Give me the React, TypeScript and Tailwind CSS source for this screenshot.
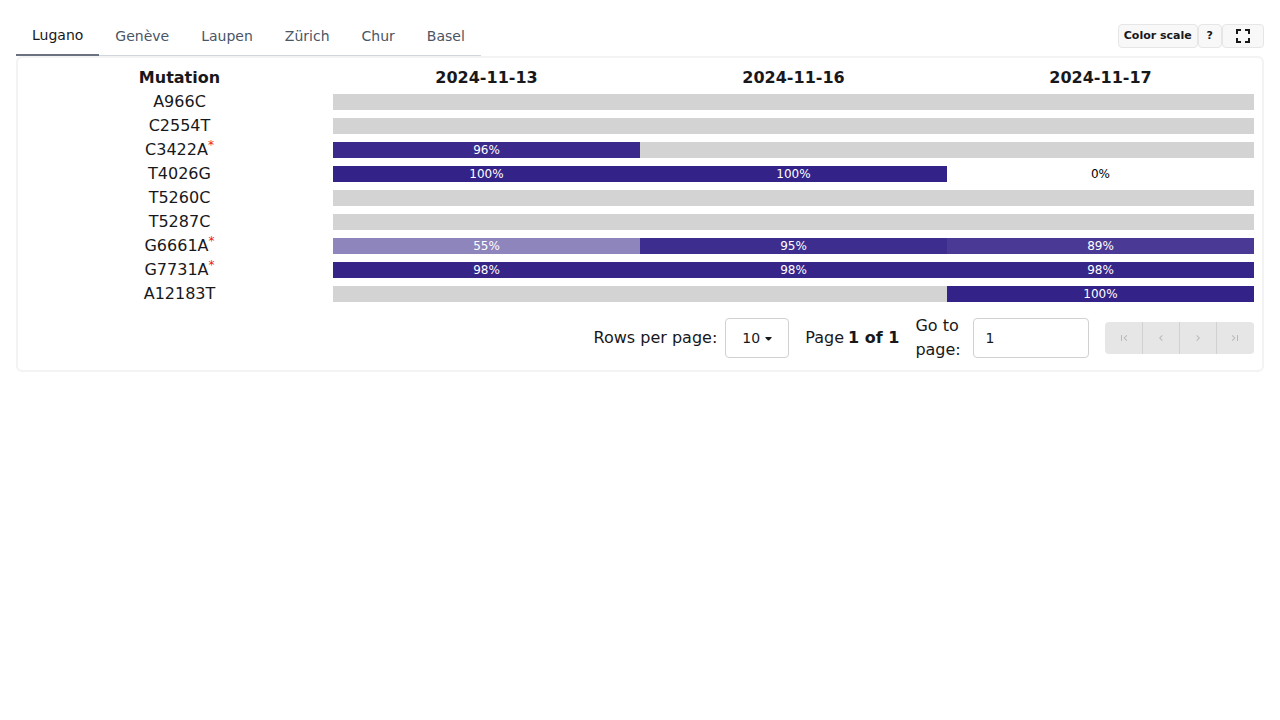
import React from "react";

const tabs = ["Lugano", "Genève", "Laupen", "Zürich", "Chur", "Basel"];
const dates = ["2024-11-13", "2024-11-16", "2024-11-17"];

type Cell = [text: string, background: string] | null;
type Row = { name: string; flagged?: boolean; cells: Cell[] };

const full = "bg-[#332288]";
const c98 = "bg-[#372689]";

const rows: Row[] = [
  { name: "A966C", cells: [null, null, null] },
  { name: "C2554T", cells: [null, null, null] },
  { name: "C3422A", flagged: true, cells: [["96%", "bg-[#3b2a8c]"], null, null] },
  { name: "T4026G", cells: [["100%", full], ["100%", full], ["0%", "bg-white"]] },
  { name: "T5260C", cells: [null, null, null] },
  { name: "T5287C", cells: [null, null, null] },
  {
    name: "G6661A",
    flagged: true,
    cells: [["55%", "bg-[#8f85bd]"], ["95%", "bg-[#3d2d8e]"], ["89%", "bg-[#4a3a95]"]],
  },
  { name: "G7731A", flagged: true, cells: [["98%", "bg-[#362587]"], ["98%", c98], ["98%", c98]] },
  { name: "A12183T", cells: [null, null, ["100%", full]] },
];

const pageIcons = [
  "M18.41 16.59L13.82 12l4.59-4.59L17 6l-6 6l6 6zM6 6h2v12H6z",
  "M15.41 16.58L10.83 12l4.58-4.59L14 6l-6 6l6 6z",
  "M8.59 16.58L13.17 12L8.59 7.41L10 6l6 6l-6 6z",
  "M5.59 7.41L10.18 12l-4.59 4.59L7 18l6-6l-6-6zM16 6h2v12h-2z",
];

function Icon({ d, className }: { d: string; className: string }) {
  return (
    <svg viewBox="0 0 24 24" fill="currentColor" className={className}>
      <path d={d} />
    </svg>
  );
}

function Toolbar() {
  const button =
    "flex h-6 items-center justify-center rounded border border-[#e6e6e6] bg-[#f8f8f8] text-[11px] font-bold leading-none";
  return (
    <div className="flex pt-2">
      <button className={`${button} w-20 pb-px pr-[0.5px]`}>Color scale</button>
      <button className={`${button} w-6 pb-px pr-[0.5px]`}>?</button>
      <button className={`${button} w-[42px]`}>
        <Icon
          className="size-6 shrink-0"
          d="M5 5h5v2H7v3H5zm9 0h5v5h-2V7h-3zm3 9h2v5h-5v-2h3zm-7 3v2H5v-5h2v3z"
        />
      </button>
    </div>
  );
}

function MutationTable() {
  return (
    <div>
      <div className="grid h-6 grid-cols-4 text-center font-bold">
        <div>Mutation</div>
        {dates.map((date) => (
          <div key={date}>{date}</div>
        ))}
      </div>
      {rows.map((row) => (
        <div key={row.name} className="grid h-6 grid-cols-4 items-center text-center">
          <div className="h-6">
            {row.name}
            {row.flagged && <sup className="text-xs leading-none text-[#f01818]">*</sup>}
          </div>
          {row.cells.map((cell, i) => (
            <div
              key={i}
              className={`h-4 text-xs leading-4 ${cell ? cell[1] : "bg-[#d3d3d3]"} ${
                cell && cell[0] === "0%" ? "text-black" : "text-white"
              }`}
            >
              {cell?.[0]}
            </div>
          ))}
        </div>
      ))}
    </div>
  );
}

function Pagination() {
  return (
    <div className="mt-2 flex items-center justify-end gap-4">
      <div className="flex items-center gap-2">
        <span>Rows per page:</span>
        <button className="flex h-10 w-16 items-center rounded border border-[#d1d1d1] pl-4 text-sm">
          10
          <svg viewBox="0 0 7 4" className="ml-[4.5px] mt-px h-1 w-[7px]" fill="currentColor">
            <path d="M.6 0h5.8q.6.4 0 1L4 3.4q-.5.4-1 0L.6 1q-.6-.6 0-1z" />
          </svg>
        </button>
      </div>
      <span className="flex gap-1">
        <span>Page</span>
        <b>1 of 1</b>
      </span>
      <div className="flex items-center">
        <span className="w-[57.6px]">Go to page:</span>
        <input
          className="h-10 w-[116px] rounded border border-[#d1d1d1] px-[11.5px] text-sm outline-none"
          defaultValue="1"
        />
      </div>
      <div className="flex h-8 overflow-hidden rounded bg-[#e6e6e6] text-[#b9b9b9]">
        {pageIcons.map((d, i) => (
          <button
            key={i}
            className="flex w-[37px] items-center justify-center border-r border-[#d1d1d1] first:w-[38px] last:border-[#e6e6e6]"
          >
            <Icon d={d} className="size-3" />
          </button>
        ))}
      </div>
    </div>
  );
}

export default function App() {
  return (
    <div className="min-h-screen bg-white p-4 font-['DejaVu_Sans',sans-serif] text-base text-[#18181b]">
      <div className="flex justify-between">
        <div className="flex h-10 text-sm">
          {tabs.map((tab, i) => (
            <button
              key={tab}
              className={`flex items-center px-4 ${
                i === 0
                  ? "border-b-2 border-[#6a7282]"
                  : "border-b border-[#d1d5dc] text-[#4a5565]"
              }`}
            >
              {tab}
            </button>
          ))}
        </div>
        <Toolbar />
      </div>
      <div className="rounded-md border-2 border-[#f3f3f4] p-2">
        <MutationTable />
        <Pagination />
      </div>
    </div>
  );
}
